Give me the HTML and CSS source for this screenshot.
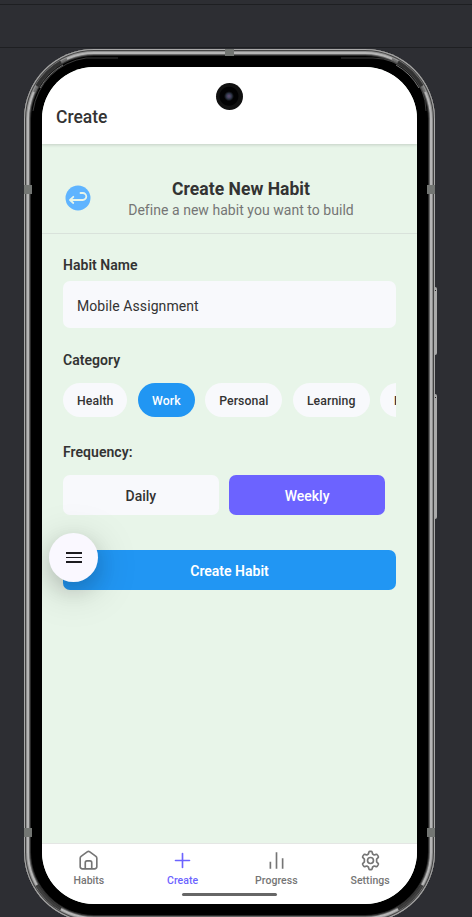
FILE: index.html
```html
<!DOCTYPE html>
<html lang="en">
<head>
<meta charset="utf-8">
<title>Create</title>
<link rel="stylesheet" href="styles.css">
</head>
<body>
<div class="toolbar"></div>
<div class="stage">
  <div class="phone">
    <i class="key key-power"></i><i class="key key-volume"></i>
    <svg class="shine" viewBox="0 0 411 873">
      <g fill="none">
        <path d="M9 62A62 62 0 0 1 62 9H94M349 9h-32M349 9A53 53 0 0 1 402 62" stroke="#555" stroke-width=".7"/>
        <path d="M13 37A66 66 0 0 1 37 13M374 13A66 66 0 0 1 398 37M13 836A66 66 0 0 0 37 860M374 860A66 66 0 0 0 398 836" stroke="#222" stroke-opacity=".8" stroke-width="3.500"/>
        <path d="M10 43A66 66 0 0 1 43 10M368 10A66 66 0 0 1 401 43" stroke="#222" stroke-opacity=".45" stroke-width="2"/>
        <path d="M16 39A62 62 0 0 1 39 16M372 16A62 62 0 0 1 395 39" stroke="#777" stroke-width="1"/>
      </g>
    </svg>
    <i class="band band-top"></i><i class="band band-l1"></i><i class="band band-r1"></i><i class="band band-l2"></i><i class="band band-r2"></i>
    <div class="bezel">
      <div class="screen">
        <header class="appbar"><h1>Create</h1></header>
        <main class="content">
          <section class="intro">
            <svg class="back" viewBox="0 0 26 26"><circle cx="13" cy="13" r="12.5" fill="#5fb4ff"/><path d="M15.5 8h2.300a3.400 3.400 0 0 1 0 7H5.200M8.300 11.800L5 15l3.300 3" fill="none" stroke="#e8f5e9" stroke-width="1.800" stroke-linecap="round" stroke-linejoin="round"/></svg>
            <div class="intro-text"><h2>Create New Habit</h2><p>Define a new habit you want to build</p></div>
          </section>
          <form class="form">
            <label class="label">Habit Name</label>
            <div class="input">Mobile Assignment</div>
            <div class="label label-category">Category</div>
            <div class="chips"><span class="chip">Health</span><span class="chip active">Work</span><span class="chip">Personal</span><span class="chip">Learning</span><span class="chip">Fitness</span></div>
            <div class="label label-frequency">Frequency:</div>
            <div class="options"><span class="option">Daily</span><span class="option selected">Weekly</span></div>
            <div class="submit">Create Habit</div>
          </form>
        </main>
        <nav class="tabs">
          <a class="tab"><svg viewBox="0 0 24 24"><path d="M2.500 9.300v9.700a2.500 2.500 0 0 0 2.500 2.500h14a2.500 2.500 0 0 0 2.500-2.500V9.300a2.500 2.500 0 0 0-1-2l-7-5.100a2.500 2.500 0 0 0-3 0l-7 5.100a2.500 2.500 0 0 0-1 2zM8.300 21.500V14.500a2 2 0 0 1 2-2h3.400a2 2 0 0 1 2 2v7"/></svg><span>Habits</span></a>
          <a class="tab current"><svg viewBox="0 0 24 24"><path d="M12 4v16M4 12h16"/></svg><span>Create</span></a>
          <a class="tab"><svg class="butt" viewBox="0 0 24 24"><path d="M5 21.500v-8M12 21.500V2.500M19 21.500V9.500"/></svg><span>Progress</span></a>
          <a class="tab"><svg viewBox="0 0 24 24"><path d="M9.600 4.600L10.200 2.300Q10.500 1.500 11.300 1.500H12.700Q13.500 1.500 13.800 2.300L14.400 4.600L16.200 5.700L18.500 5Q19.400 4.800 19.800 5.500L20.900 7.300Q21.300 8.100 20.700 8.700L19 10.400V13.600L20.700 15.300Q21.300 15.900 20.900 16.700L19.800 18.500Q19.400 19.200 18.500 19L16.200 18.300L14.400 19.400L13.800 21.700Q13.500 22.500 12.700 22.500H11.300Q10.500 22.500 10.200 21.700L9.600 19.400L7.800 18.300L5.500 19Q4.600 19.200 4.200 18.500L3.100 16.700Q2.700 15.900 3.300 15.300L5 13.600V10.400L3.300 8.700Q2.700 8.100 3.100 7.300L4.200 5.500Q4.600 4.800 5.500 5L7.800 5.700Z"/><circle cx="12" cy="12" r="3.400"/></svg><span>Settings</span></a>
        </nav>
        <div class="camera"></div>
        <div class="fab"><i></i><i></i><i></i></div>
        <div class="handle"></div>
      </div>
    </div>
  </div>
</div>
</body>
</html>
```

FILE: styles.css
```css
* { box-sizing: border-box; }
html, body { height: 100%; overflow: hidden; }
body { margin: 0; background: #2d2e33; font-family: Roboto, sans-serif; color: #333; }
h1, h2, p { margin: 0; }
.toolbar { height: 48px; border-bottom: 1px solid #1e1f22; background: linear-gradient(#1e1f22, #1e1f22) 0 4px / 100% 1px no-repeat; }
.stage { padding: 1px 0 0 24px; }
.phone {
  position: relative; width: 411px; height: 873px; padding: 9px 8px; border-radius: 70px;
  background: #000;
  box-shadow: inset 0 0 0 1px #a9a9a9, inset 0 0 0 2px #444, inset 0 0 0 3px #8d8d8d, inset 0 0 0 5px #b5b5b5, inset 0 0 0 6px #666, inset 0 0 0 7px #2a2a2a;
}
.shine { position: absolute; left: 0; top: 0; width: 411px; height: 873px; z-index: 1; }
.bezel { height: 100%; padding: 9px 10px; border-radius: 62px; background: #000; }
.screen { position: relative; width: 375px; height: 837px; border-radius: 52px; overflow: hidden; background: #e8f5e9; display: flex; flex-direction: column; }
.band { position: absolute; background: #737673; width: 8px; height: 9px; z-index: 2; }
.band-top { left: 201px; top: 0; width: 9px; height: 7px; }
.band-l1 { left: 0; top: 136px; }
.band-r1 { right: 0; top: 136px; }
.band-l2 { left: 0; top: 779px; }
.band-r2 { right: 0; top: 779px; }
.key { position: absolute; left: 411px; width: 2px; background: linear-gradient(#222 0 1px, transparent 0) 0 3px / 1px 2px no-repeat, #aaa; border-radius: 0 2px 2px 0; }
.key-power { top: 238px; height: 68px; }
.key-volume { top: 345px; height: 125px; }
.appbar { height: 77px; padding: 38px 14px 0; background: #fff; box-shadow: 0 1px 3px rgba(0,0,0,.16); z-index: 1; }
.appbar h1 { font-size: 17.500px; line-height: 24px; font-weight: 500; }
.content { flex: 1; }
.intro { display: flex; height: 90px; padding: 34px 21px 0 23px; border-bottom: 1px solid #d9e2db; }
.back { width: 26px; height: 26px; margin-top: 7px; }
.intro-text { flex: 1; text-align: center; padding-right: 5px; }
.intro h2 { font-size: 17.500px; line-height: 22px; font-weight: 700; letter-spacing: .03px; }
.intro p { font-size: 14px; line-height: 21px; color: #757575; letter-spacing: .04px; }
.form { padding: 21px 21px 0; }
.label { display: block; font-size: 14px; line-height: 20px; font-weight: 600; letter-spacing: .04px; }
.input { margin-top: 6px; height: 47px; padding: 0 14px; line-height: 50px; border-radius: 7px; background: #f8f9fc; font-size: 14px; letter-spacing: .08px; }
.label-category { margin-top: 22px; }
.chips { display: flex; gap: 10.500px; margin-top: 13px; overflow: hidden; }
.chip { flex: none; height: 34px; padding: 0 14px; border-radius: 17px; background: #f8f9fc; font-size: 12.250px; line-height: 36px; font-weight: 500; letter-spacing: .1px; }
.active { background: #2196f3; color: #fff; }
.label-frequency { margin-top: 25px; }
.options { display: flex; gap: 10.500px; margin-top: 13px; padding-right: 11px; }
.option { flex: 1; height: 40px; border-radius: 7px; background: #f8f9fc; text-align: center; font-size: 14px; line-height: 42px; font-weight: 500; }
.selected { background: #6c63ff; color: #fff; }
.submit { height: 40.400px; margin-top: 35px; border-radius: 7px; background: #2196f3; color: #fff; text-align: center; font-size: 14px; line-height: 42px; font-weight: 600; }
.tabs { display: flex; height: 61px; padding-top: 6px; background: #fff; border-top: 1px solid #e4e6e4; }
.tab { flex: 1; display: flex; flex-direction: column; align-items: center; color: #757575; font-size: 10.500px; line-height: 13px; font-weight: 500; letter-spacing: .05px; gap: 3px; }
.tab svg { width: 21px; height: 21px; fill: none; stroke: currentColor; stroke-width: 1.900; stroke-linecap: round; stroke-linejoin: round; }
.tab svg.butt { stroke-linecap: butt; }
.tab.current { color: #6c63ff; }
.camera { position: absolute; z-index: 2; left: 174px; top: 16px; width: 27px; height: 27px; border-radius: 50%; background: radial-gradient(circle at 48% 49%, #56496a 0 1px, #293343 3px, #15171d 4px, #020203 5px 9px, #111 10px); }
.fab { position: absolute; left: 7px; top: 466px; width: 49px; height: 49px; border-radius: 50%; background: #faf8ff; display: flex; flex-direction: column; align-items: center; justify-content: center; gap: 3px; box-shadow: 0 8px 20px rgba(0,0,0,.14), 0 8px 44px rgba(0,0,0,.18); }
.fab i { width: 16px; height: 1.700px; background: #1c1b1f; }
.handle { position: absolute; left: 140px; bottom: 8px; width: 95px; height: 3px; border-radius: 2px; background: #666; }
```
